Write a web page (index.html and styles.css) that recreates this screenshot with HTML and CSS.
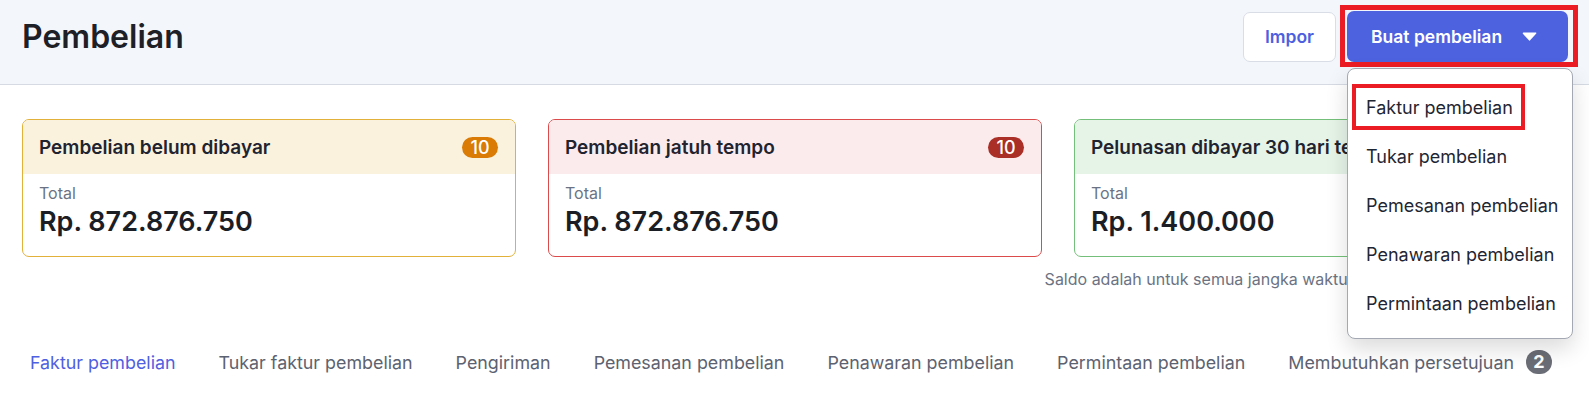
FILE: index.html
```html
<!DOCTYPE html>
<html lang="id">

<head>
  <meta charset="UTF-8">
  <meta name="viewport" content="width=device-width, initial-scale=1.0">
  <title>Pembelian</title>
  <link rel="stylesheet" href="styles.css">
</head>

<body>
  <header class="page-header">
    <h1>Pembelian</h1>
    <div class="actions">
      <button class="btn btn-outline">Impor</button>
      <div class="dropdown">
        <button class="btn btn-primary">
          Buat pembelian
          <svg class="caret" width="15" height="9" viewBox="0 0 15 9">
            <path d="M1.5 1.2 L7.5 7.8 L13.5 1.2 Z" fill="#fff" stroke="#fff" stroke-width="1.6" stroke-linejoin="round" />
          </svg>
        </button>
        <span class="mark mark-btn"></span>
        <ul class="dropdown-menu">
          <li><a href="javascript:;" class="marked">Faktur pembelian</a></li>
          <li><a href="javascript:;">Tukar pembelian</a></li>
          <li><a href="javascript:;">Pemesanan pembelian</a></li>
          <li><a href="javascript:;">Penawaran pembelian</a></li>
          <li><a href="javascript:;">Permintaan pembelian</a></li>
        </ul>
      </div>
    </div>
  </header>

  <main class="content">
    <section class="summary">
      <div class="card card-warning">
        <div class="card-head">
          <span>Pembelian belum dibayar</span>
          <span class="badge">10</span>
        </div>
        <div class="card-body">
          <div class="label">Total</div>
          <div class="amount">Rp. 872.876.750</div>
        </div>
      </div>
      <div class="card card-danger">
        <div class="card-head">
          <span>Pembelian jatuh tempo</span>
          <span class="badge">10</span>
        </div>
        <div class="card-body">
          <div class="label">Total</div>
          <div class="amount">Rp. 872.876.750</div>
        </div>
      </div>
      <div class="card card-success">
        <div class="card-head">
          <span class="clip">Pelunasan dibayar 30 hari terakhir</span>
        </div>
        <div class="card-body">
          <div class="label">Total</div>
          <div class="amount">Rp. 1.400.000</div>
        </div>
      </div>
    </section>
    <p class="note">Saldo adalah untuk semua jangka waktu, tidak termasuk filter tanggal</p>

    <nav class="tabs">
      <a href="javascript:;" class="active">Faktur pembelian</a>
      <a href="javascript:;">Tukar faktur pembelian</a>
      <a href="javascript:;">Pengiriman</a>
      <a href="javascript:;">Pemesanan pembelian</a>
      <a href="javascript:;">Penawaran pembelian</a>
      <a href="javascript:;">Permintaan pembelian</a>
      <a href="javascript:;">Membutuhkan persetujuan <span class="count">2</span></a>
    </nav>
  </main>
</body>

</html>
```

FILE: styles.css
```css
/* reset */
* {
  margin: 0;
  padding: 0;
  box-sizing: border-box;
}

body {
  font-family: Inter, "Noto Sans", Arial, sans-serif;
  background-color: #ffffff;
  color: #1f2329;
}

a {
  text-decoration: none;
  color: inherit;
}

/* header */
.page-header {
  display: flex;
  align-items: center;
  justify-content: space-between;
  padding: 11px 21px 22px 22px;
  background-color: #f3f6fb;
  border-bottom: 1px solid #d6dae2;
}

.page-header h1 {
  font-size: 32px;
  font-weight: 600;
  color: #1d2026;
}

.actions {
  display: flex;
  align-items: center;
  gap: 11px;
}

.btn {
  display: flex;
  align-items: center;
  height: 50px;
  border-radius: 7px;
  font-family: inherit;
  font-size: 17.5px;
  font-weight: 600;
  cursor: pointer;
}

.btn-outline {
  padding: 0 21px;
  background-color: #ffffff;
  color: #4d5fdf;
  border: 1px solid #d9dde5;
}

.btn-primary {
  height: 51px;
  width: 221px;
  padding: 0 31px 0 24px;
  justify-content: space-between;
  background-color: #4d62df;
  color: #ffffff;
  border: none;
}

/* dropdown */
.dropdown {
  position: relative;
}

.dropdown-menu {
  position: absolute;
  top: 57px;
  left: 0;
  z-index: 10;
  width: 226px;
  padding: 14px 0 10px;
  list-style: none;
  background-color: #ffffff;
  border: 1px solid #a3a8b2;
  border-radius: 8px;
  box-shadow: 0 10px 22px rgba(0, 0, 0, 0.14);
}

.dropdown-menu li {
  height: 49px;
  display: flex;
  align-items: center;
  padding-left: 18px;
}

.dropdown-menu a {
  position: relative;
  font-size: 18px;
  color: #1f2633;
}

/* red annotation frames */
.mark {
  position: absolute;
  top: -6px;
  left: -7px;
  right: -10px;
  bottom: -5px;
  border: 5px solid #ec1c24;
  pointer-events: none;
}

.marked::before {
  content: "";
  position: absolute;
  top: -13px;
  bottom: -12px;
  left: -14px;
  right: -12px;
  border: 4px solid #ec1c24;
}

/* summary cards */
.content {
  padding: 34px 21px 0 22px;
}

.summary {
  display: grid;
  grid-template-columns: repeat(3, 1fr);
  gap: 32px;
}

.card {
  border: 1px solid;
  border-radius: 7px;
  overflow: hidden;
}

.card-head {
  display: flex;
  align-items: center;
  justify-content: space-between;
  height: 54px;
  padding: 0 17px 0 16px;
  font-size: 19px;
  font-weight: 600;
  color: #1f2430;
  white-space: nowrap;
}

/* the rest of this title sits under the open menu */
.clip {
  max-width: 256px;
  overflow: hidden;
}

.badge {
  min-width: 36px;
  height: 21px;
  padding: 0 6px;
  border-radius: 11px;
  font-size: 18px;
  font-weight: 500;
  line-height: 21px;
  text-align: center;
  color: #ffffff;
}

.card-body {
  padding: 9px 16px 17px;
}

.label {
  font-size: 16px;
  line-height: 20px;
  color: #6b7383;
}

.amount {
  margin-top: 2px;
  font-size: 27px;
  font-weight: 600;
  line-height: 34px;
  color: #1b1e24;
}

.card-warning {
  border-color: #e2b13a;
}

.card-warning .card-head {
  background-color: #fbf2de;
}

.card-warning .badge {
  background-color: #d97b05;
}

.card-danger {
  border-color: #dc4b4b;
}

.card-danger .card-head {
  background-color: #fcebed;
}

.card-danger .badge {
  background-color: #a92f27;
}

.card-success {
  border-color: #74c07a;
}

.card-success .card-head {
  background-color: #e6f4e8;
}

.note {
  margin-top: 12px;
  text-align: right;
  font-size: 16px;
  color: #6b7383;
}

/* tabs */
.tabs {
  display: flex;
  align-items: center;
  gap: 27px;
  margin-top: 61px;
}

.tabs a {
  display: flex;
  flex-shrink: 0;
  align-items: center;
  gap: 12px;
  padding: 0 8px;
  font-size: 17.85px;
  color: #5c6270;
  white-space: nowrap;
}

.tabs a.active {
  color: #4f60e0;
}

.count {
  display: inline-block;
  width: 26px;
  height: 24px;
  border-radius: 12px;
  background-color: #6a6d75;
  color: #ffffff;
  font-size: 18px;
  font-weight: 700;
  line-height: 24px;
  text-align: center;
}
```
